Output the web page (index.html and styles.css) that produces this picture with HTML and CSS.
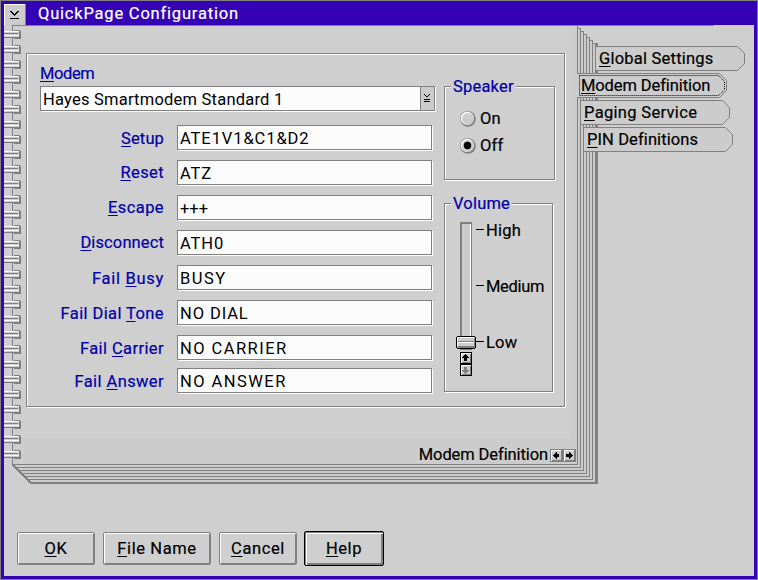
FILE: index.html
```html
<!DOCTYPE html>
<html lang="en">
<head>
<meta charset="utf-8">
<title>QuickPage Configuration</title>
<link rel="stylesheet" href="styles.css">
</head>
<body>
<div class="window">
  <header class="titlebar">
    <svg class="sysmenu" width="22" height="21" shape-rendering="crispEdges"><path fill="#ccc" d="M0 0h22v21H0z"/><path fill="#fff" d="M0 0h21v1H1v20H0z"/><path fill="#808080" d="M21 0h1v21h-1z"/><path d="M6 7h2v1h1v1h1v1h1v-1h1v-1h1v-1h2v1h-1v1h-1v1h-1v1h-1v1h-1v-1H9v-1H8V9H7V8H6zM6 14h9v1H6z"/></svg>
    <h1>QuickPage Configuration</h1>
  </header>
  <main class="client">
    <section class="notebook">
      <svg class="sheets" width="750" height="462" shape-rendering="crispEdges">
        <path fill="#ccc" d="M9 0H574V3h3v3h3v3h3v3h3v3h3v3h5V459H27L9 440z"/>
        <path fill="url(#d)" d="M9 0H566V414H9z"/>
        <defs><pattern id="d" width="2" height="2" patternUnits="userSpaceOnUse"><path fill="#ccc" d="M0 0h2v2H0z"/><path fill="#d2d2d2" d="M0 0h1v1H0zM1 1h1v1H1z"/></pattern>
        <pattern id="ring" width="17" height="15" patternUnits="userSpaceOnUse" y="4"><path fill="#ccc" d="M0 2h17v7H0z"/><path fill="#808080" d="M10 1h6v1h-6zM15 2h2v8h-2zM10 9h6v1h-6zM0 4h14v1H0zM0 8h15v1H0z"/><path fill="#fff" d="M0 2h15v1H0zM0 6h15v1H0z"/></pattern></defs>
        <g fill="none" stroke="#808080">
          <path d="M8.500 0V439.500H573.500V0M8 .5H710"/>
          <path d="M11 442.500H576.500V3.500H573M14 445.500H579.500V6.500H576M17 448.500H582.500V9.500H579M20 451.500H585.500V12.500H582M23 454.500H588.500V15.500H585"/>
          <path stroke-width="2" d="M9 440L27 458H592V18"/><path d="M588 18.500H593.500V459"/>
        </g>
        <rect y="4" width="17" height="435" fill="url(#ring)"/>
      </svg>
      <div class="panel">
        <form class="form">
          <label class="modem"><span><u>M</u>odem</span></label>
          <div class="combo"><span>Hayes Smartmodem Standard 1</span>
            <svg width="14" height="23" shape-rendering="crispEdges"><path fill="#ccc" d="M0 0h14v23H0z"/><path fill="#808080" d="M0 0h1v23H0z"/><path d="M4 7h1v1h1v1h2V8h1V7h1v1H9v1H8v1H6V9H5V8H4zM4 12h6v1H4zM4 14h6v1H4z"/></svg>
          </div>
          <div class="fields">
            <label class="snug"><span><u>S</u>etup</span></label><div class="in"><span>ATE1V1&amp;C1&amp;D2</span></div>
            <label class="high"><span><u>R</u>eset</span></label><div class="in"><span>ATZ</span></div>
            <label class="high"><span><u>E</u>scape</span></label><div class="in plus"><span>+++</span></div>
            <label class="high snug"><span><u>D</u>isconnect</span></label><div class="in"><span>ATH0</span></div>
            <label class="busy"><span>Fail <u>B</u>usy</span></label><div class="in wide"><span>BUSY</span></div>
            <label><span>Fail Dial <u>T</u>one</span></label><div class="in"><span>NO DIAL</span></div>
            <label><span>Fail <u>C</u>arrier</span></label><div class="in wide"><span>NO CARRIER</span></div>
            <label class="last"><span>Fail <u>A</u>nswer</span></label><div class="in wide last"><span>NO ANSWER</span></div>
          </div>
        </form>
        <div class="side">
          <section class="group speaker"><h2><span>Speaker</span></h2>
            <div class="radio"><svg width="16" height="16"><circle cx="8" cy="8" r="7.800" fill="#808080"/><circle cx="7" cy="7" r="6.900" fill="#a0a0a0"/><circle cx="7.300" cy="7.300" r="6.500" fill="#fff"/><circle cx="7.900" cy="7.900" r="5.900" fill="#ccc"/></svg><span>On</span></div>
            <div class="radio"><svg width="16" height="16"><circle cx="8" cy="8" r="7.800" fill="#808080"/><circle cx="7" cy="7" r="6.900" fill="#a0a0a0"/><circle cx="7.300" cy="7.300" r="6.500" fill="#fff"/><circle cx="7.900" cy="7.900" r="5.900" fill="#ccc"/><circle cx="7.500" cy="7.500" r="3.700"/></svg><span>Off</span></div>
          </section>
          <section class="group volume"><h2><span>Volume</span></h2>
            <div class="slider">
              <svg width="30" height="156" shape-rendering="crispEdges"><path fill="#ccc" d="M4 0h12v128H4z"/><path fill="#808080" d="M4 0h12v2H6v126H4zM15 2h1v126h-1zM6 127h9v1H6z"/><path fill="#fff" d="M14 2h1v124h-1z"/>
              <path d="M20 7h8v1h-8zM20 63h8v1h-8zM20 119h8v1h-8z"/>
              <path d="M1 114h18v1h1v11h-1v1H1v-1H0v-11h1z"/><path fill="#ccc" d="M1 115h18v11H1z"/><path fill="#fff" d="M1 115h17v1H2v3H1zM1 120h17v1H2v3H1z"/><path fill="#808080" d="M2 119h17v1H2zM2 124h17v2H2zM18 116h1v9h-1z"/>
              <path d="M4 130h12v24H4z"/><path fill="#ccc" d="M5 131h10v10H5zM5 143h10v10H5z"/><path fill="#fff" d="M5 131h10v1H6v9H5zM5 143h10v1H6v9H5z"/><path fill="#808080" d="M14 132h1v9H6v-1h8zM14 144h1v9H6v-1h8z"/>
              <path d="M9 132h1v1h1v1h1v1h1v1h-2v3H8v-3H6v-1h1v-1h1v-1h1z"/><path fill="#808080" d="M8 145h3v3h2v1h-1v1h-1v1h-1v1H9v-1H8v-1H7v-1H6v-1h2z"/></svg>
              <div class="ticks"><span>High</span><span class="tight">Medium</span><span>Low</span></div>
            </div>
          </section>
        </div>
      </div>
      <nav class="tabs">
        <a class="tab t1"><svg width="150" height="25"><path d="M.5 .5H142.500L149.500 7.500V17.500L142.500 24.500H.5z"/></svg><span><u>G</u>lobal Settings</span></a>
        <a class="tab t2"><svg width="150" height="25"><path stroke="none" d="M0 0H143L150 7V18L143 25H0z"/><path d="M0 .5H142.500L149.500 7.500V17.500L142.500 24.500H0"/><path class="focus" d="M2.500 2.500H141.500L147.500 8.500V17L141.500 22.500H2.500z"/></svg><span class="tight"><u>M</u>odem Definition</span></a>
        <a class="tab t3"><svg width="150" height="25"><path d="M.5 .5H142.500L149.500 7.500V17.500L142.500 24.500H.5z"/></svg><span><u>P</u>aging Service</span></a>
        <a class="tab t4"><svg width="150" height="25"><path d="M.5 .5H142.500L149.500 7.500V17.500L142.500 24.500H.5z"/></svg><span><u>P</u>IN Definitions</span></a>
      </nav>
      <div class="status"><span class="tight">Modem Definition</span>
        <svg width="26" height="13" shape-rendering="crispEdges"><path fill="#808080" d="M0 0h26v13H0z"/><path fill="#ccc" d="M1 1h10v10H1zM14 1h10v10H14z"/><path fill="#fff" d="M1 1h10v1H2v10H1zM14 1h10v1H15v10h-1z"/><path d="M3 6h1V5h1V4h1V3h1v2h2v3H7v2H6V9H5V8H4V7H3zM23 6h-1V5h-1V4h-1V3h-1v2h-3v3h3v2h1V9h1V8h1V7h1z"/></svg>
      </div>
    </section>
    <footer class="buttons">
      <button class="b1"><span><u>O</u>K</span></button><button class="b2"><span><u>F</u>ile Name</span></button><button class="b3"><span><u>C</u>ancel</span></button><button class="b4"><span><u>H</u>elp</span></button>
    </footer>
  </main>
</div>
</body>
</html>
```
FILE: styles.css
```css
:root {
  --grey: url("data:image/svg+xml,%3Csvg xmlns='http://www.w3.org/2000/svg' width='4' height='4' shape-rendering='crispEdges'%3E%3Cpath fill='%23ccc' d='M0 0h4v4H0z'/%3E%3Cpath fill='%23d2d2d2' d='M0 0h1v1H0zM2 0h1v1H2zM1 1h1v1H1zM3 1h1v1H3zM0 2h1v1H0zM2 2h1v1H2zM1 3h1v1H1zM3 3h1v1H3z'/%3E%3C/svg%3E");
  --cream: url("data:image/svg+xml,%3Csvg xmlns='http://www.w3.org/2000/svg' width='4' height='4' shape-rendering='crispEdges'%3E%3Cpath fill='%23fff' d='M0 0h4v4H0z'/%3E%3Cpath fill='%23ffc' d='M0 0h1v1H0zM2 0h1v1H2zM1 1h1v1H1zM3 1h1v1H3zM0 2h1v1H0zM2 2h1v1H2zM1 3h1v1H1zM3 3h1v1H3z'/%3E%3C/svg%3E");
  --violet: url("data:image/svg+xml,%3Csvg xmlns='http://www.w3.org/2000/svg' width='4' height='4' shape-rendering='crispEdges'%3E%3Cpath fill='%233300b4' d='M0 0h4v4H0z'/%3E%3Cpath fill='%23550088' d='M0 0h1v1H0zM2 0h1v1H2zM0 2h1v1H0zM2 2h1v1H2z'/%3E%3C/svg%3E");
}
* { box-sizing: border-box; }
body { margin: 0; font: 16.5px/25px Roboto, "Liberation Sans", sans-serif; letter-spacing: .8px; color: #000; overflow: hidden; }
h1, h2 { margin: 0; font: inherit; }
span { white-space: nowrap; }
u { text-decoration: underline; text-decoration-thickness: 1px; text-underline-offset: 2px; text-decoration-skip-ink: none; }
svg { display: block; flex: none; }

.window { width: 758px; height: 580px; padding: 0 3px 3px; border: 1px solid #808080; background: var(--violet); }
.titlebar { height: 24px; display: flex; align-items: flex-end; }
.titlebar h1 { color: #fff; line-height: 24px; height: 24px; margin-left: 12px; padding-top: 1px; -webkit-text-stroke: .2px; }
.client { height: 551px; background: var(--grey); -webkit-text-stroke: .2px; }

.notebook { position: relative; height: 506px; display: grid; grid-template-columns: 551px 1fr; grid-template-rows: 418px 25px; padding-left: 22px; }
.sheets { position: absolute; left: 0; top: 0; }

.panel { position: relative; display: flex; width: 539px; height: 354px; margin-top: 28px; padding-left: 13px; border: 1px solid #808080; box-shadow: 1px 1px #fff, inset 1px 1px #fff; }
.form { width: 404px; padding-top: 7px; color: #0000a8; letter-spacing: .4px; }
.form .modem { display: block; letter-spacing: -.4px; }
.combo, .in { border: 1px solid #808080; box-shadow: 1px 1px #fff; color: #000; height: 25px; line-height: 25px; padding-left: 2px; background: var(--cream) 1px 0 fixed; letter-spacing: .9px; -webkit-text-stroke: 0; }
.combo { display: flex; justify-content: space-between; width: 395px; letter-spacing: .22px; }
.wide { letter-spacing: 1.45px; }
.plus { letter-spacing: 0; }
.fields { display: grid; grid-template-columns: 124px 255px; gap: 10px 13px; margin-top: 14px; grid-auto-rows: 25px; }
.fields label { text-align: right; line-height: 27px; }
.fields .high { line-height: 25px; }
.fields .snug { letter-spacing: .12px; }
.fields .busy { letter-spacing: .7px; }
.fields .last { margin-top: -2px; }

.group { border: 1px solid #808080; box-shadow: 1px 1px #fff, inset 1px 1px #fff; letter-spacing: .2px; }
.group h2 { color: #0000a8; line-height: 25px; height: 25px; margin: -13px 0 0 6px; padding: 0 2px; width: max-content; background: var(--grey); }
.speaker { width: 111px; height: 94px; margin-top: 32px; }
.volume { width: 109px; height: 189px; margin-top: 23px; }
.radio { display: flex; align-items: center; gap: 4px; height: 27px; margin-left: 15px; }
.speaker h2 + .radio { margin-top: 6px; }
.slider { display: flex; margin: 6px 0 0 11px; }
.ticks { display: flex; flex-direction: column; gap: 31px; margin-top: -4px; }
.tight { letter-spacing: -.1px; }
.ticks .tight { letter-spacing: -.3px; }

.tabs { position: relative; margin-top: 21px; display: flex; flex-direction: column; gap: 2px; letter-spacing: .22px; }
.tab { position: relative; width: 150px; height: 25px; }
.tab svg { position: absolute; left: 0; top: 0; fill: #ccc; stroke: #808080; }
.tab .focus { fill: none; stroke: #000; stroke-dasharray: 1 1; }
.tab span { position: relative; margin-left: 4px; }
.t1 { margin-left: 18px; }
.t3 { margin-left: 3px; letter-spacing: .32px; }
.t4 { margin-left: 6px; letter-spacing: .1px; }

.status { position: relative; display: flex; justify-content: flex-end; align-items: center; gap: 2px; width: 550px; }
.status span { line-height: 23px; padding-bottom: 2px; }

.buttons { display: flex; padding-left: 13px; align-items: center; height: 34px; }
button { font: inherit; letter-spacing: .6px; color: #000; padding: 0; height: 33px; border: 1px solid #808080; border-radius: 2px; background: var(--grey); box-shadow: inset 1px 1px #fff, inset -1px -1px #808080; }
.b1 { width: 78px; margin-right: 8px; }
.b2 { width: 108px; margin-right: 8px; }
.b3 { width: 78px; margin-right: 7px; }
.b4 { width: 80px; height: 35px; border-color: #000; box-shadow: inset 1px 1px #808080, inset 2px 2px #fff, inset -2px -2px #808080; }
```
